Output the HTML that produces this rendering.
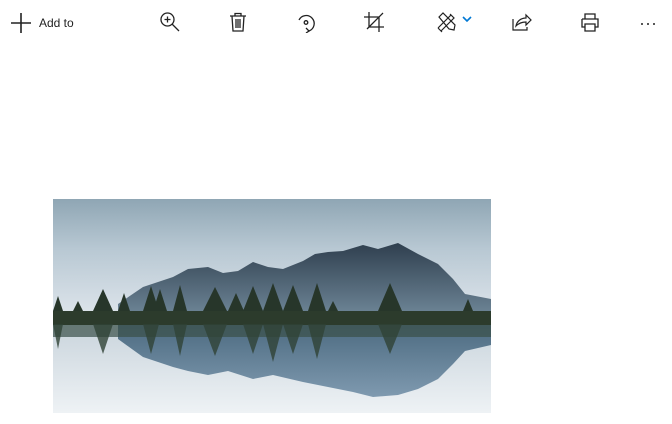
<!DOCTYPE html>
<html><head><style>
html,body{margin:0;padding:0;background:#fff;width:672px;height:424px;overflow:hidden;font-family:"Liberation Sans",sans-serif}
.ic{position:absolute;top:11px}
</style></head><body>
<svg class="ic" style="left:10px;top:12px" width="22" height="22" viewBox="0 0 22 22"><path d="M11 1v20M1 11h20" stroke="#222" stroke-width="1.6"/></svg>
<div style="position:absolute;left:39px;top:16px;font-size:12px;color:#222">Add to</div>
<svg class="ic" style="left:159px" width="22" height="22" viewBox="0 0 22 22" fill="none" stroke="#222" stroke-width="1.3"><circle cx="8.5" cy="8.5" r="6.5"/><path d="M13 13l7 7M8.5 5.5v6M5.5 8.5h6"/></svg>
<svg class="ic" style="left:227px" width="22" height="22" viewBox="0 0 22 22" fill="none" stroke="#222" stroke-width="1.3"><path d="M3 5h16M8 5V2.5h6V5M5 5l1 15h10l1-15M9 8v9M11 8v9M13 8v9"/></svg>
<svg class="ic" style="left:295px" width="22" height="22" viewBox="0 0 22 22" fill="none" stroke="#222" stroke-width="1.3"><path d="M4 9a8 8 0 1 1 10 11"/><path d="M11 17l3 3-3 2"/><circle cx="11" cy="11.5" r="1.8"/></svg>
<svg class="ic" style="left:363px" width="22" height="22" viewBox="0 0 22 22" fill="none" stroke="#222" stroke-width="1.3"><path d="M6 1v15h15M1 6h15v15M4 18L20 2"/></svg>
<svg class="ic" style="left:436px" width="20" height="22" viewBox="0 0 20 22" fill="none" stroke="#222" stroke-width="1.2"><path d="M3 6l4-4 12 12 -1 5-5-1zM14 3l3 3M2 17l4 4M2 17l13-13 3 3-13 13"/></svg>
<svg class="ic" style="left:462px;top:16px" width="10" height="7" viewBox="0 0 10 7"><path d="M1 1l4 4 4-4" stroke="#0078d4" stroke-width="1.6" fill="none"/></svg>
<svg class="ic" style="left:511px" width="22" height="22" viewBox="0 0 22 22" fill="none" stroke="#222" stroke-width="1.2"><path d="M2 8v11h14v-3"/><path d="M5 15c1-5 5-8 10-8V4l5 5-5 5v-3c-4 0-7 1-10 4z"/></svg>
<svg class="ic" style="left:579px" width="22" height="22" viewBox="0 0 22 22" fill="none" stroke="#222" stroke-width="1.3"><path d="M6 8V3h10v5M3 8h16v8h-3M6 16H3V8M6 13h10v7H6z"/></svg>
<svg class="ic" style="left:640px;top:22px" width="16" height="4" viewBox="0 0 16 4" fill="#222"><circle cx="2" cy="2" r="1"/><circle cx="8" cy="2" r="1"/><circle cx="14" cy="2" r="1"/></svg>
<svg style="position:absolute;left:53px;top:199px" width="438" height="214" viewBox="0 0 438 214">
<defs>
<linearGradient id="sky" x1="0" y1="0" x2="0" y2="1"><stop offset="0" stop-color="#8fa6b4"/><stop offset=".4" stop-color="#b8c8d3"/><stop offset="1" stop-color="#e2e8ee"/></linearGradient>
<linearGradient id="wat" x1="0" y1="0" x2="0" y2="1"><stop offset="0" stop-color="#c9d4dc"/><stop offset="1" stop-color="#eef2f5"/></linearGradient>
<linearGradient id="mt" x1="0" y1="0" x2="0" y2="1"><stop offset="0" stop-color="#2f3f4e"/><stop offset="1" stop-color="#6f8798"/></linearGradient>
<linearGradient id="rf" x1="0" y1="0" x2="0" y2="1"><stop offset="0" stop-color="#4c6a80"/><stop offset="1" stop-color="#7f9ab0"/></linearGradient>
</defs>
<rect width="438" height="125" fill="url(#sky)"/>
<rect y="125" width="438" height="89" fill="url(#wat)"/>
<path d="M65 105L90 88 120 78 135 70 155 68 170 74 185 72 200 63 215 68 230 70 250 62 262 55 275 53 290 52 310 46 325 50 345 44 365 55 385 65 400 80 412 95 438 100V118H65z" fill="url(#mt)"/>
<path d="M65 140L90 158 120 168 135 172 155 176 175 172 200 180 220 176 250 183 275 188 300 193 320 198 345 196 365 190 385 180 400 165 412 152 438 146V125H65z" fill="url(#rf)"/>
<rect y="112" width="438" height="14" fill="#2c3b2c"/>
<rect y="126" width="438" height="12" fill="#3b5048" opacity=".7"/>
<g fill="#27362a">
<path d="M0 112l5-15 5 15zM20 112l5-10 5 10zM40 112l10-22 10 22zM65 112l6-18 6 18zM90 112l8-25 8 25zM100 112l7-22 7 22zM120 112l7-26 7 26zM150 112l12-24 12 24zM175 112l8-18 8 18zM190 112l10-25 10 25zM210 112l10-28 10 28zM230 112l10-26 10 26zM255 112l9-28 9 28zM275 112l5-10 5 10zM325 112l12-28 12 28zM410 112l5-12 5 12z"/>
</g>
<g fill="#2f4236" opacity=".8">
<path d="M0 125l5 25 5-25zM40 125l10 30 10-30zM90 125l8 30 8-30zM120 125l7 32 7-32zM150 125l12 32 12-32zM190 125l10 30 10-30zM210 125l10 38 10-38zM230 125l10 30 10-30zM255 125l9 35 9-35zM325 125l12 30 12-30z"/>
</g>
</svg>
</body></html>
